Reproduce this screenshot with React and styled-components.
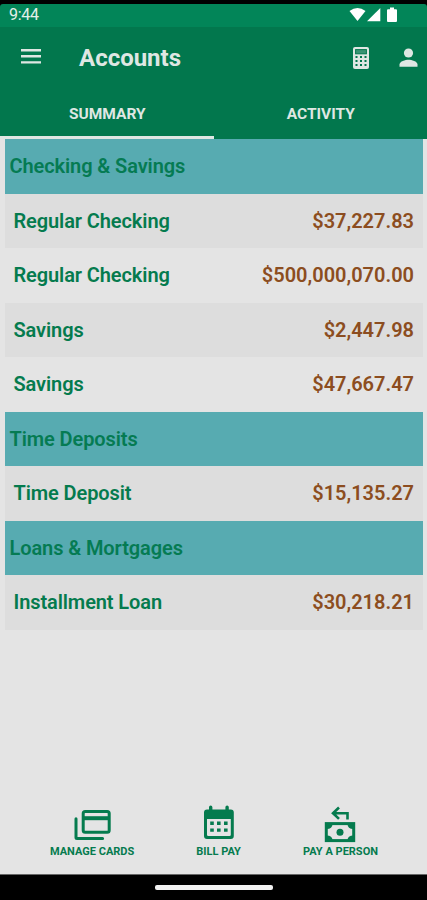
import React from 'react'
import styled, { createGlobalStyle } from 'styled-components'

const GlobalStyle = createGlobalStyle`
  * {
    box-sizing: border-box;
  }
  body {
    margin: 0;
    background: #000;
    font-family: Roboto, sans-serif;
  }
`;

const Screen = styled.div`
  display: flex;
  flex-direction: column;
  width: 427px;
  height: 900px;
  padding-top: 4px;
  overflow: hidden;
  background: #000;
`;

const StatusBar = styled.div`
  display: flex;
  align-items: center;
  justify-content: space-between;
  height: 23px;
  padding: 0 28px 2px 9px;
  border-radius: 3px 3px 0 0;
  background: #028558;
  color: #e2f0ea;
  font-size: 16px;
  line-height: 20px;
`;

const Clock = styled.span`
  letter-spacing: -0.3px;
`;

const StatusIcons = styled.div`
  display: flex;
  align-items: center;
  svg {
    display: block;
  }
`;

const Header = styled.header`
  height: 112px;
  background: #02774d;
  color: #dfe7e3;
`;

const Toolbar = styled.div`
  display: flex;
  align-items: center;
  height: 62px;
  padding: 0 9px 0 21px;
  svg {
    display: block;
  }
`;

const MenuButton = styled.div`
  padding-bottom: 3px;
`;

const Title = styled.h1`
  flex: 1;
  margin: 0 0 0 38px;
  font-size: 24px;
  font-weight: 700;
  line-height: 28px;
`;

const Tools = styled.div`
  display: flex;
  align-items: center;
  gap: 30px;
`;

const Tabs = styled.div`
  display: flex;
  height: 50px;
`;

const Tab = styled.div`
  flex: 1;
  padding: 15px 0 0 1px;
  border-bottom: 3px solid ${props => (props.$active ? '#dfe7e3' : 'transparent')};
  text-align: center;
  font-size: 15.5px;
  font-weight: 700;
  line-height: 20px;
`;

const Content = styled.main`
  display: flex;
  flex: 1;
  flex-direction: column;
  padding: 0 4px 0 5px;
  background: #e4e4e4;
`;

const SectionTitle = styled.h2`
  height: 54.5px;
  margin: 0;
  padding-left: 4.5px;
  background: #57abb1;
  color: #057b53;
  font-size: 20px;
  font-weight: 600;
  line-height: 55px;
  letter-spacing: -0.1px;
`;

const Row = styled.div`
  display: flex;
  justify-content: space-between;
  height: 54.5px;
  padding: 0 9px 0 8.5px;
  background: ${props => (props.$shaded ? '#dddddd' : '#e4e4e4')};
  font-size: 20px;
  font-weight: 600;
  line-height: 55px;
`;

const AccountName = styled.span`
  color: #057b4e;
  letter-spacing: -0.1px;
`;

const Balance = styled.span`
  color: #8c4d20;
`;

const BottomNav = styled.nav`
  display: flex;
  align-items: flex-end;
  justify-content: space-between;
  margin-top: auto;
  padding: 0 45px 15px;
`;

const NavItem = styled.div`
  display: flex;
  flex-direction: column;
  align-items: center;
  color: #057b4e;
  font-size: 11px;
  font-weight: 700;
  line-height: 14px;
  svg {
    display: block;
    margin-bottom: 1px;
  }
`;

const SystemBar = styled.div`
  display: flex;
  align-items: center;
  justify-content: center;
  height: 26px;
  border-top: 1px solid #666;
  background: #000;
`;

const HomeHandle = styled.div`
  width: 118px;
  height: 5px;
  border-radius: 2px;
  background: #f2f2f2;
`;

const sections = [
  {
    title: 'Checking & Savings',
    accounts: [
      { name: 'Regular Checking', balance: '$37,227.83' },
      { name: 'Regular Checking', balance: '$500,000,070.00' },
      { name: 'Savings', balance: '$2,447.98' },
      { name: 'Savings', balance: '$47,667.47' },
    ],
  },
  {
    title: 'Time Deposits',
    accounts: [{ name: 'Time Deposit', balance: '$15,135.27' }],
  },
  {
    title: 'Loans & Mortgages',
    accounts: [{ name: 'Installment Loan', balance: '$30,218.21' }],
  },
];

const MenuIcon = () => (
  <svg width="20" height="15" viewBox="0 0 20 15" fill="currentColor">
    <path d="M0 0h20v2.4H0zM0 6.1h20v2.4H0zM0 12.2h20v2.4H0z" />
  </svg>
);

const CalculatorIcon = () => (
  <svg width="16" height="22" viewBox="0 0 16 22">
    <rect width="16" height="22" rx="2" fill="currentColor" />
    <rect x="2.6" y="2.6" width="10.8" height="4.2" fill="#02774d" fillOpacity="0.75" stroke="#02774d" />
    <path
      d="M2.5 9h2v2h-2zM7 9h2v2H7zM11.5 9h2v2h-2zM2.5 13h2v2h-2zM7 13h2v2H7zM11.5 13h2v2h-2zM2.5 17h2v2h-2zM7 17h2v2H7zM11.5 17h2v2h-2z"
      fill="#02774d"
    />
  </svg>
);

const PersonIcon = () => (
  <svg width="19" height="20" viewBox="0 0 19 20" fill="currentColor">
    <circle cx="9.5" cy="5" r="4.6" />
    <path d="M0.5 18.8v-2.3c0-3.2 6-4.8 9-4.8s9 1.6 9 4.8v2.3z" />
  </svg>
);

const SignalIcons = () => (
  <svg width="50" height="16" viewBox="0 0 50 16" fill="#fff">
    <path d="M0.5 4Q8.5-2 16.5 4L8.5 14z" />
    <path d="M18 14.3L31.3 1v13.3z" />
    <path d="M39 2.3h2V0.6h4v1.7h2q1 0 1 1v10.7q0 1-1 1h-8q-1 0-1-1V3.3q0-1 1-1z" />
  </svg>
);

const CardsIcon = () => (
  <svg width="38" height="36" viewBox="0 0 38 36" fill="none" stroke="currentColor" strokeWidth="3">
    <rect x="10.2" y="3.4" width="26" height="20.8" rx="2" />
    <path d="M10.2 10.2h26" strokeWidth="4" />
    <path d="M3 10.8v18.6q0 1 1 1h25.6" strokeLinecap="round" />
  </svg>
);

const CalendarIcon = () => (
  <svg width="32" height="39" viewBox="0 0 32 39" fill="currentColor">
    <path
      fillRule="evenodd"
      d="M4 4.5h2V2.2q0-1.7 1.7-1.7t1.7 1.7v2.3h13V2.2q0-1.7 1.7-1.7t1.7 1.7v2.3h2q3 0 3 3v23.5q0 3-3 3H4q-3 0-3-3v-23.5q0-3 3-3zM4 14v15.8q0 1.3 1.3 1.3h21.2q1.3 0 1.3-1.3V14z"
    />
    <path d="M7.2 16.6h3.6v3.4H7.2zM14 16.6h3.6v3.4H14zM21 16.6h3.6v3.4H21zM7.2 23.4h3.6v3.4H7.2zM14 23.4h3.6v3.4H14zM21 23.4h3.6v3.4H21z" />
  </svg>
);

const PayIcon = () => (
  <svg width="32" height="38" viewBox="0 0 32 38" fill="none" stroke="currentColor">
    <path d="M15 1.5L9 7.2l6 5.7M9 7.2h14.5v6.3" strokeWidth="2.6" />
    <rect x="2.3" y="17.6" width="27.4" height="17" strokeWidth="3" />
    <path d="M2.5 18h6q0 5-6 5zM29.5 18h-6q0 5 6 5zM2.5 34.5h6q0-5-6-5zM29.5 34.5h-6q0-5 6-5z" fill="currentColor" stroke="none" />
    <circle cx="16" cy="26.2" r="3.5" fill="currentColor" stroke="none" />
  </svg>
);

function App() {
  return (
    <>
      <GlobalStyle />
      <Screen>
        <StatusBar>
          <Clock>9:44</Clock>
          <StatusIcons>
            <SignalIcons />
          </StatusIcons>
        </StatusBar>
        <Header>
          <Toolbar>
            <MenuButton>
              <MenuIcon />
            </MenuButton>
            <Title>Accounts</Title>
            <Tools>
              <CalculatorIcon />
              <PersonIcon />
            </Tools>
          </Toolbar>
          <Tabs>
            <Tab $active>SUMMARY</Tab>
            <Tab>ACTIVITY</Tab>
          </Tabs>
        </Header>
        <Content>
          {sections.map(section => (
            <section key={section.title}>
              <SectionTitle>{section.title}</SectionTitle>
              {section.accounts.map((account, i) => (
                <Row key={i} $shaded={i % 2 === 0}>
                  <AccountName>{account.name}</AccountName>
                  <Balance>{account.balance}</Balance>
                </Row>
              ))}
            </section>
          ))}
          <BottomNav>
            <NavItem>
              <CardsIcon />
              MANAGE CARDS
            </NavItem>
            <NavItem>
              <CalendarIcon />
              BILL PAY
            </NavItem>
            <NavItem>
              <PayIcon />
              PAY A PERSON
            </NavItem>
          </BottomNav>
        </Content>
        <SystemBar>
          <HomeHandle />
        </SystemBar>
      </Screen>
    </>
  )
}

export default App
